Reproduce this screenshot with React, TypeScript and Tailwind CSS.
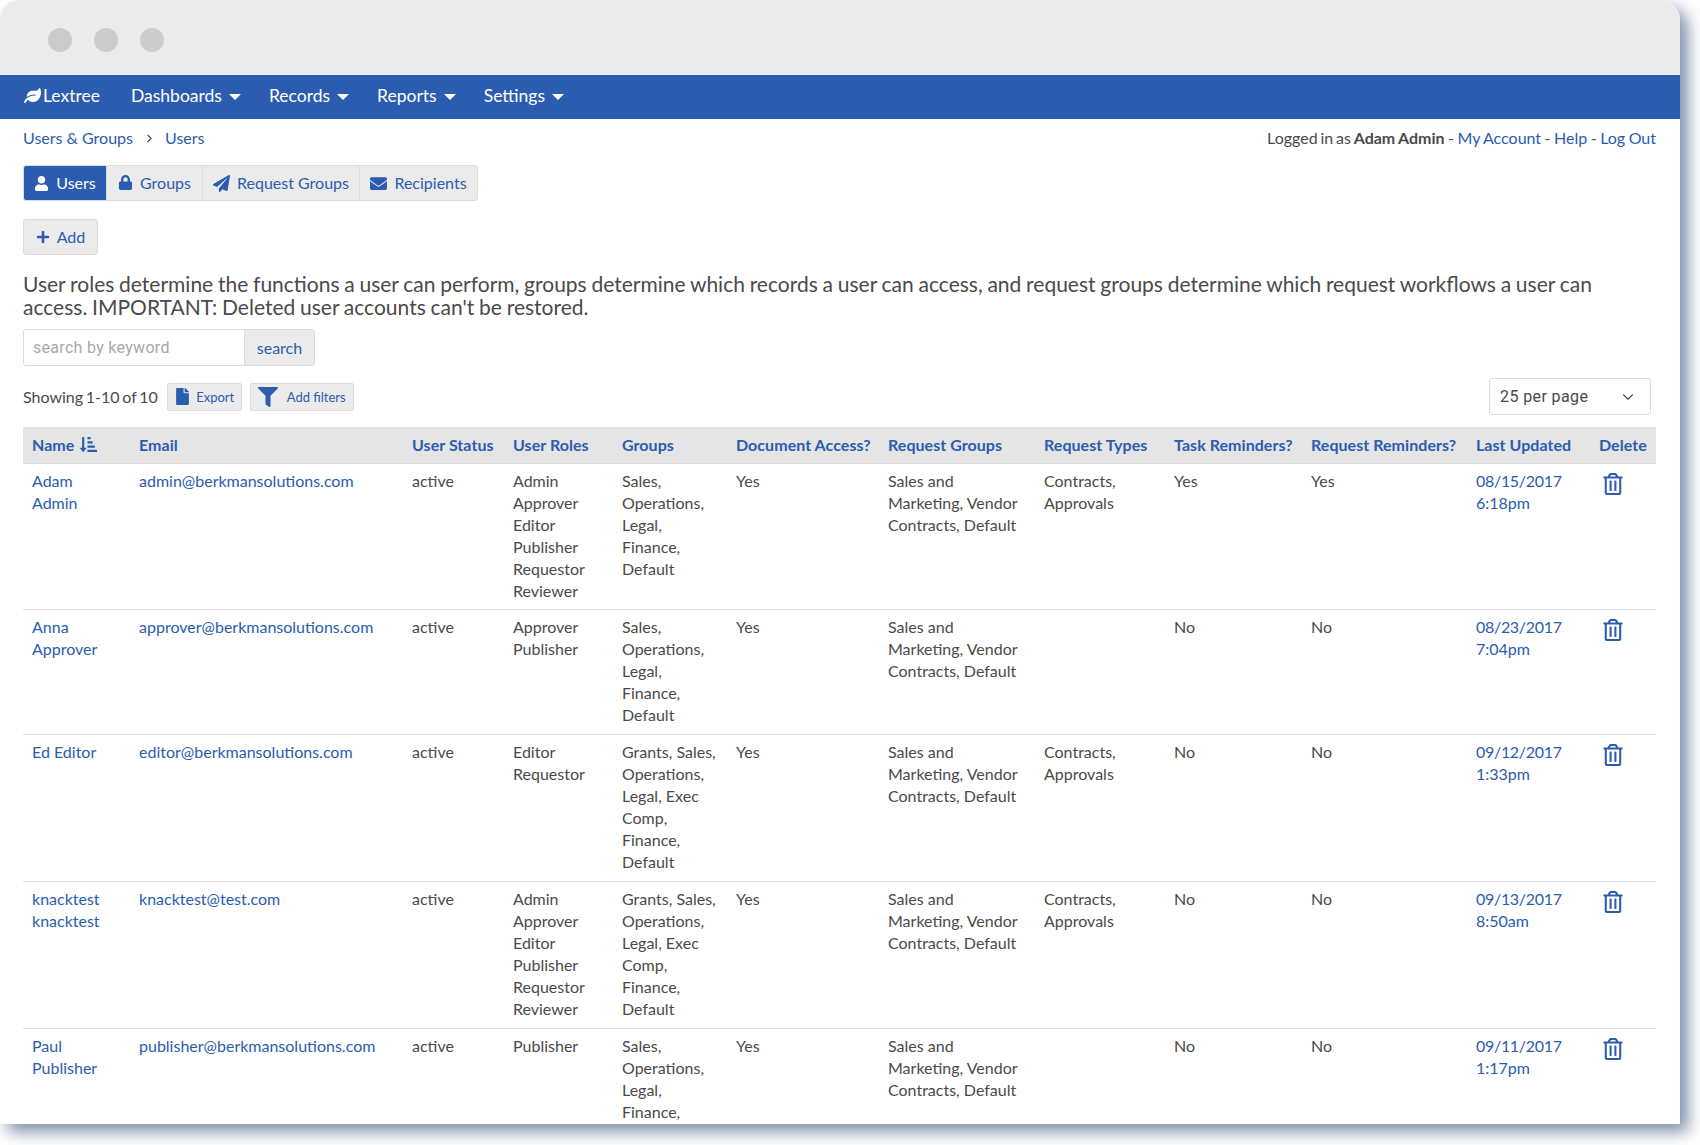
import { ChevronDown, ChevronRight } from 'lucide-react';
import {
  FaEnvelope,
  FaFile,
  FaFilter,
  FaLeaf,
  FaLock,
  FaPaperPlane,
  FaPlus,
  FaRegTrashAlt,
  FaSortAmountDownAlt,
  FaUser,
} from 'react-icons/fa';

const navItems = ['Dashboards', 'Records', 'Reports', 'Settings'];

const salesGroups = 'Sales, Operations, Legal, Finance, Default';
const grantGroups = 'Grants, Sales, Operations, Legal, Exec Comp, Finance, Default';
const requestGroups = 'Sales and Marketing, Vendor Contracts, Default';
const requestTypes = 'Contracts, Approvals';

const users = [
  {
    name: 'Adam Admin',
    email: 'admin@berkmansolutions.com',
    roles: ['Admin', 'Approver', 'Editor', 'Publisher', 'Requestor', 'Reviewer'],
    groups: salesGroups,
    types: requestTypes,
    task: 'Yes',
    request: 'Yes',
    date: '08/15/2017',
    time: '6:18pm',
  },
  {
    name: 'Anna Approver',
    email: 'approver@berkmansolutions.com',
    roles: ['Approver', 'Publisher'],
    groups: salesGroups,
    types: '',
    task: 'No',
    request: 'No',
    date: '08/23/2017',
    time: '7:04pm',
  },
  {
    name: 'Ed Editor',
    email: 'editor@berkmansolutions.com',
    roles: ['Editor', 'Requestor'],
    groups: grantGroups,
    types: requestTypes,
    task: 'No',
    request: 'No',
    date: '09/12/2017',
    time: '1:33pm',
  },
  {
    name: 'knacktest knacktest',
    email: 'knacktest@test.com',
    roles: ['Admin', 'Approver', 'Editor', 'Publisher', 'Requestor', 'Reviewer'],
    groups: grantGroups,
    types: requestTypes,
    task: 'No',
    request: 'No',
    date: '09/13/2017',
    time: '8:50am',
  },
  {
    name: 'Paul Publisher',
    email: 'publisher@berkmansolutions.com',
    roles: ['Publisher'],
    groups: salesGroups,
    types: '',
    task: 'No',
    request: 'No',
    date: '09/11/2017',
    time: '1:17pm',
  },
];

const columns = [
  { label: 'Email', width: 'w-[273px]' },
  { label: 'User Status', width: 'w-[101px]' },
  { label: 'User Roles', width: 'w-[109px]' },
  { label: 'Groups', width: 'w-[114px]' },
  { label: 'Document Access?', width: 'w-[152px]' },
  { label: 'Request Groups', width: 'w-[156px]' },
  { label: 'Request Types', width: 'w-[130px]' },
  { label: 'Task Reminders?', width: 'w-[137px]' },
  { label: 'Request Reminders?', width: 'w-[165px]' },
  { label: 'Last Updated', width: 'w-[123px]' },
  { label: 'Delete', width: 'w-[66px]' },
];

const tabs = [
  { label: 'Users', icon: <FaUser className="text-[15px]" />, active: true, width: 'w-[82px]' },
  { label: 'Groups', icon: <FaLock className="text-[15px] -translate-y-px" />, width: 'w-[96px]' },
  { label: 'Request Groups', icon: <FaPaperPlane className="text-[17px]" />, width: 'w-[157px]' },
  { label: 'Recipients', icon: <FaEnvelope className="text-[17px]" />, width: 'w-[118px]' },
];

const cell = 'px-[9px] pb-[7.75px] pt-[6px]';

export default function App() {
  return (
    <div className="h-[1145px] w-[1700px] overflow-hidden bg-white font-['Lato',sans-serif] text-[16px] leading-[22px] text-[#4a4a4a]">
      <div className="flex h-[1124px] w-[1680px] flex-col overflow-hidden rounded-t-[20px] bg-white shadow-[8px_8px_16px_rgba(60,85,125,0.65)]">
        {/* window chrome */}
        <div className="flex h-[75px] shrink-0 items-center gap-[22px] bg-[#ebebeb] pl-[48px] pt-[5px]">
          <span className="h-[24px] w-[24px] rounded-full bg-[#cbcbcb]" />
          <span className="h-[24px] w-[24px] rounded-full bg-[#cbcbcb]" />
          <span className="h-[24px] w-[24px] rounded-full bg-[#cbcbcb]" />
        </div>

        {/* nav */}
        <nav className="flex h-[44px] shrink-0 items-center bg-[#2b5caf] pb-[3px] pl-[24px] text-[17.5px] text-white">
          <FaLeaf className="mr-[2px] text-[17px]" />
          <span className="mr-[31px]">Lextree</span>
          {navItems.map((item) => (
            <span key={item} className="mr-[28px] flex items-center">
              {item}
              <span className="ml-[7px] mt-[2px] h-0 w-0 border-x-[6px] border-t-[6px] border-x-transparent border-t-white" />
            </span>
          ))}
        </nav>

        <div className="flex-1 px-[23px] pr-[24px]">
          {/* breadcrumb */}
          <div className="flex h-[38px] items-center justify-between text-[#2b5caf]">
            <div className="flex items-center">
              <span>Users &amp; Groups</span>
              <ChevronRight className="mx-[9.5px] h-[13px] w-[13px] text-[#4a4a4a]" />
              <span>Users</span>
            </div>
            <div className="[word-spacing:-0.6px]">
              <span className="text-[#4a4a4a]">
                <span className="[word-spacing:-1.3px]">Logged in as </span>
                <b className="font-bold">Adam Admin</b> -{' '}
              </span>
              My Account <span className="text-[#4a4a4a]">-</span> Help <span className="text-[#4a4a4a]">-</span> Log Out
            </div>
          </div>

          {/* tabs */}
          <div className="mt-[8px] flex h-[36px] w-fit overflow-hidden rounded-[3px] border border-[#dcdcdc] bg-[#ebebeb] text-[#2b5caf]">
            {tabs.map((tab) => (
              <div
                key={tab.label}
                className={
                  tab.active
                    ? `flex items-center justify-center gap-[7px] bg-[#2b5caf] text-white ${tab.width}`
                    : `flex items-center justify-center gap-[7px] border-l border-[#dcdcdc] ${tab.width}`
                }
              >
                {tab.icon}
                {tab.label}
              </div>
            ))}
          </div>

          {/* add */}
          <div className="mt-[18px] flex h-[36px] w-[75px] items-center justify-center gap-[7px] rounded-[3px] border border-[#dcdcdc] bg-[#ebebeb] text-[#2b5caf]">
            <FaPlus className="text-[14px]" />
            Add
          </div>

          <p className="mt-[17px] text-[21px] leading-[23px] [word-spacing:-0.62px]">
            User roles determine the functions a user can perform, groups determine which records a user can access, and
            request groups determine which request workflows a user can access. IMPORTANT: Deleted user accounts can't be
            restored.
          </p>

          {/* search */}
          <div className="mt-[11px] flex h-[37px] w-[292px] overflow-hidden rounded-[3px] border border-[#dcdcdc]">
            <input
              placeholder="search by keyword"
              className="w-[220px] bg-white px-[9px] pt-px font-['Roboto',sans-serif] text-[16px] tracking-[0.3px] outline-none placeholder:text-[#a9a9a9]"
            />
            <div className="flex flex-1 items-center justify-center border-l border-[#dcdcdc] bg-[#ebebeb] text-[#2b5caf]">
              search
            </div>
          </div>

          {/* toolbar */}
          <div className="mt-[12px] flex h-[37px] items-center justify-between pr-[5px]">
            <div className="flex items-center">
              <span className="mr-[9px] [word-spacing:-1.4px]">Showing 1-10 of 10</span>
              <div className="mr-[8px] flex h-[28px] w-[75px] items-center justify-center gap-[5px] rounded-[2px] border border-[#dcdcdc] bg-[#ebebeb] text-[13px] text-[#2b5caf]">
                <FaFile className="text-[17px]" />
                Export
              </div>
              <div className="flex h-[28px] w-[104px] items-center justify-center gap-[9px] rounded-[2px] border border-[#dcdcdc] bg-[#ebebeb] text-[13px] text-[#2b5caf]">
                <FaFilter className="text-[20px]" />
                Add filters
              </div>
            </div>
            <div className="flex h-[37px] w-[162px] items-center justify-between rounded-[3px] border border-[#dcdcdc] pl-[10px] pr-[13px] font-['Roboto',sans-serif] tracking-[0.4px] text-[#4a4a4a]">
              25 per page
              <ChevronDown className="h-[18px] w-[18px]" strokeWidth={1.5} />
            </div>
          </div>

          {/* users table */}
          <table className="mt-[12px] w-[1633px] table-fixed border-collapse">
            <thead>
              <tr className="h-[36px] border-b border-[#dcdcdc] bg-[#e5e5e5] text-left font-bold tracking-[0.05px] text-[#2b5caf]">
                <th className="w-[107px] px-[9px] font-bold">
                  <span className="flex items-center gap-[6px]">
                    Name <FaSortAmountDownAlt className="text-[17px]" />
                  </span>
                </th>
                {columns.map((col) => (
                  <th key={col.label} className={`${col.width} whitespace-nowrap pl-[9px] font-bold`}>
                    {col.label}
                  </th>
                ))}
              </tr>
            </thead>
            <tbody>
              {users.map((user) => (
                <tr key={user.email} className="border-b border-[#e0e0e0] align-top">
                  <td className={`${cell} text-[#2b5caf]`}>{user.name}</td>
                  <td className={`${cell} text-[#2b5caf]`}>{user.email}</td>
                  <td className={cell}>active</td>
                  <td className={cell}>
                    {user.roles.map((role) => (
                      <div key={role}>{role}</div>
                    ))}
                  </td>
                  <td className={cell}>{user.groups}</td>
                  <td className={cell}>Yes</td>
                  <td className={cell}>{requestGroups}</td>
                  <td className={cell}>{user.types}</td>
                  <td className={cell}>{user.task}</td>
                  <td className={cell}>{user.request}</td>
                  <td className={`${cell} text-[#2b5caf]`}>
                    <div className="tracking-[-0.3px]">{user.date}</div>
                    <div>{user.time}</div>
                  </td>
                  <td className={`${cell} text-[#2b5caf]`}>
                    <FaRegTrashAlt className="ml-[3px] mt-[3px] text-[22px]" />
                  </td>
                </tr>
              ))}
            </tbody>
          </table>
        </div>
      </div>
    </div>
  );
}
